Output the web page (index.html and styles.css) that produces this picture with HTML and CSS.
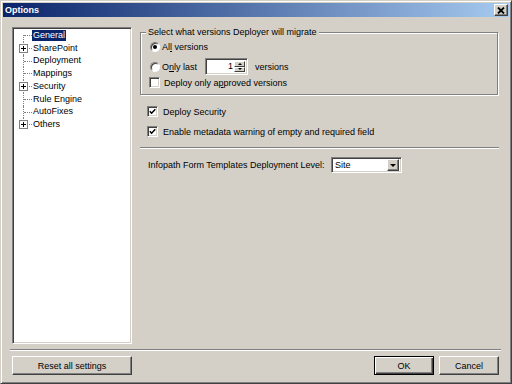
FILE: index.html
```html
<!DOCTYPE html>
<html lang="en">
  <head>
    <meta charset="UTF-8" />
    <title>Options</title>
    <link rel="stylesheet" href="styles.css">
  </head>
  <body>
    <div class="window">
      <div class="titlebar">
        <span class="title">Options</span>
        <span class="close">
          <svg width="8" height="7" viewBox="0 0 8 7"><path d="M1 0.5 L7 6.5 M7 0.5 L1 6.5" stroke="#000" stroke-width="1.8" /></svg>
        </span>
      </div>

      <div class="content">
        <div class="main">
          <div class="tree">
            <div class="node first"><span class="label sel">General</span></div>
            <div class="node"><span class="plus"></span><span class="label">SharePoint</span></div>
            <div class="node"><span class="label">Deployment</span></div>
            <div class="node"><span class="label">Mappings</span></div>
            <div class="node"><span class="plus"></span><span class="label">Security</span></div>
            <div class="node"><span class="label">Rule Engine</span></div>
            <div class="node"><span class="label">AutoFixes</span></div>
            <div class="node last"><span class="plus"></span><span class="label">Others</span></div>
          </div>

          <div class="panel">
            <fieldset class="group">
              <legend>Select what versions Deployer will migrate</legend>
              <div class="opt r1">
                <span class="radio on"></span>
                <span>Al<u>l</u> versions</span>
              </div>
              <div class="opt r2">
                <span class="radio"></span>
                <span class="only">O<u>n</u>ly last</span>
                <span class="spin">
                  <span class="spin-val">1</span>
                  <span class="spin-btns">
                    <span class="spin-btn"><span class="tri-up"></span></span>
                    <span class="spin-btn"><span class="tri-down"></span></span>
                  </span>
                </span>
                <span class="after-spin">versions</span>
              </div>
              <div class="opt r3">
                <span class="check"></span>
                <span>Deploy only a<u>p</u>proved versions</span>
              </div>
            </fieldset>

            <div class="opt out first-check">
              <span class="check"><svg width="7" height="7" viewBox="0 0 7 7"><path d="M0.8 3.2 L2.6 5.2 L6.3 1.2" fill="none" stroke="#000" stroke-width="1.5" /></svg></span>
              <span>Deploy Security</span>
            </div>
            <div class="opt out second-check">
              <span class="check"><svg width="7" height="7" viewBox="0 0 7 7"><path d="M0.8 3.2 L2.6 5.2 L6.3 1.2" fill="none" stroke="#000" stroke-width="1.5" /></svg></span>
              <span>Enable metadata warning of empty and required field</span>
            </div>

            <div class="sep panel-sep"></div>

            <div class="level-row">
              <span class="level-label">Infopath Form Templates Deployment Level:</span>
              <span class="combo">
                <span class="combo-val">Site</span>
                <span class="combo-btn"><span class="tri-dd"></span></span>
              </span>
            </div>
          </div>
        </div>

        <div class="sep bottom-sep"></div>

        <div class="footer">
          <button class="btn reset">Reset all settings</button>
          <span class="spacer"></span>
          <button class="btn default">OK</button>
          <button class="btn">Cancel</button>
        </div>
      </div>
    </div>
  </body>
</html>
```

FILE: styles.css
```css
body {
  margin: 0;
  font-family: "Liberation Sans", Arial, sans-serif;
  font-size: 9px;
  color: #000;
  background-color: #d4d0c8;
}
.window {
  width: 512px;
  height: 384px;
  box-sizing: border-box;
  background-color: #d4d0c8;
  border: 1px solid;
  border-color: #d4d0c8 #404040 #404040 #d4d0c8;
  box-shadow: inset 1px 1px #fff, inset -1px -1px #808080;
  padding: 2px;
  display: flex;
  flex-direction: column;
}
.titlebar {
  height: 14px;
  flex-shrink: 0;
  background: linear-gradient(to right, #0a246a, #a6caf0);
  display: flex;
  align-items: center;
  justify-content: space-between;
  padding: 0 1px 0 2px;
}
.title {
  color: #fff;
  font-weight: bold;
}
.close {
  width: 14px;
  height: 12px;
  box-sizing: border-box;
  background-color: #d4d0c8;
  border: 1px solid;
  border-color: #fff #404040 #404040 #fff;
  box-shadow: inset -1px -1px #808080;
  display: flex;
  align-items: center;
  justify-content: center;
}
.content {
  flex: 1;
  padding: 10px 10px 0 9px;
  display: flex;
  flex-direction: column;
}
.main {
  display: flex;
  gap: 8px;
  height: 317px;
}

/* tree */
.tree {
  width: 120px;
  flex-shrink: 0;
  box-sizing: border-box;
  background-color: #fff;
  border: 1px solid;
  border-color: #808080 #fff #fff #808080;
  box-shadow: inset 1px 1px #404040, inset -1px -1px #d4d0c8;
  padding: 1px 0 0 1px;
}
.node {
  position: relative;
  height: 12.75px;
  padding-left: 18px;
  display: flex;
  align-items: center;
}
.node::before {
  content: "";
  position: absolute;
  left: 9px;
  top: 0;
  bottom: 0;
  border-left: 1px dotted #808080;
}
.node.first::before {
  top: 6px;
}
.node.last::before {
  bottom: 6px;
}
.node::after {
  content: "";
  position: absolute;
  left: 10px;
  top: 6px;
  width: 8px;
  border-top: 1px dotted #808080;
}
.plus {
  position: absolute;
  z-index: 1;
  left: 5px;
  top: 2px;
  width: 9px;
  height: 9px;
  box-sizing: border-box;
  border: 1px solid #808080;
  background-color: #fff;
}
.plus::before {
  content: "";
  position: absolute;
  left: 1px;
  top: 3px;
  width: 5px;
  height: 1px;
  background-color: #000;
}
.plus::after {
  content: "";
  position: absolute;
  left: 3px;
  top: 1px;
  width: 1px;
  height: 5px;
  background-color: #000;
}
.label {
  line-height: 11px;
  padding: 0 1px;
}
.label.sel {
  background-color: #0a246a;
  color: #fff;
}

/* right panel */
.panel {
  flex: 1;
  display: flex;
  flex-direction: column;
}
.group {
  margin: 0 1px 0 0;
  padding: 2px 0 5px 8px;
  border: 1px solid #808080;
  box-shadow: inset 1px 1px #fff, 1px 1px #fff;
}
.group legend {
  margin-left: -3px;
  padding: 0 2px;
  line-height: 11px;
  background-color: #d4d0c8;
}
.opt {
  display: flex;
  align-items: center;
  height: 13px;
}
.r1 {
  margin-left: 1px;
  gap: 2px;
}
.r2 {
  margin-left: 1px;
  margin-top: 5px;
  height: 17px;
  gap: 2px;
}
.r3 {
  margin-top: 1px;
  gap: 4px;
}
.radio {
  width: 10px;
  height: 10px;
  box-sizing: border-box;
  border-radius: 50%;
  border: 1px solid;
  border-color: #808080 #fff #fff #808080;
  box-shadow: inset 1px 1px #404040;
  background-color: #fff;
  display: flex;
  align-items: center;
  justify-content: center;
}
.radio.on::after {
  content: "";
  width: 4px;
  height: 4px;
  border-radius: 50%;
  background-color: #000;
}
.check {
  width: 11px;
  height: 11px;
  box-sizing: border-box;
  border: 1px solid;
  border-color: #808080 #fff #fff #808080;
  box-shadow: inset 1px 1px #404040, inset -1px -1px #d4d0c8;
  background-color: #fff;
  display: flex;
  align-items: center;
  justify-content: center;
}
.only {
  width: 41px;
}
.spin {
  width: 43px;
  height: 17px;
  box-sizing: border-box;
  border: 1px solid;
  border-color: #808080 #fff #fff #808080;
  box-shadow: inset 1px 1px #404040, inset -1px -1px #d4d0c8;
  background-color: #fff;
  padding: 2px;
  display: flex;
}
.spin-val {
  flex: 1;
  text-align: right;
  padding-right: 1px;
  line-height: 11px;
}
.spin-btns {
  width: 11px;
  display: flex;
  flex-direction: column;
}
.spin-btn {
  flex: 1;
  box-sizing: border-box;
  background-color: #d4d0c8;
  border: 1px solid;
  border-color: #fff #404040 #404040 #fff;
  display: flex;
  align-items: center;
  justify-content: center;
}
.tri-up {
  border-left: 2px solid transparent;
  border-right: 2px solid transparent;
  border-bottom: 2px solid #000;
}
.tri-down {
  border-left: 2px solid transparent;
  border-right: 2px solid transparent;
  border-top: 2px solid #000;
}
.after-spin {
  margin-left: 5px;
}
.out {
  margin-left: 7px;
  gap: 5px;
}
.first-check {
  margin-top: 10px;
}
.second-check {
  margin-top: 7px;
}
.sep {
  height: 0;
  border-top: 1px solid #808080;
  border-bottom: 1px solid #fff;
}
.panel-sep {
  margin-top: 9px;
}
.level-row {
  margin-top: 8px;
  margin-left: 8px;
  display: flex;
  align-items: center;
}
.level-label {
  width: 183px;
}
.combo {
  width: 71px;
  height: 16px;
  box-sizing: border-box;
  border: 1px solid;
  border-color: #808080 #fff #fff #808080;
  box-shadow: inset 1px 1px #404040, inset -1px -1px #d4d0c8;
  background-color: #fff;
  padding: 2px;
  display: flex;
  align-items: center;
}
.combo-val {
  flex: 1;
  padding-left: 1px;
  color: #000;
}
.combo-btn {
  width: 12px;
  height: 12px;
  box-sizing: border-box;
  background-color: #d4d0c8;
  border: 1px solid;
  border-color: #fff #404040 #404040 #fff;
  box-shadow: inset -1px -1px #808080;
  display: flex;
  align-items: center;
  justify-content: center;
}
.tri-dd {
  border-left: 3px solid transparent;
  border-right: 3px solid transparent;
  border-top: 3px solid #000;
}

/* bottom */
.bottom-sep {
  margin: 5px -2px 0;
}
.footer {
  margin-top: 5px;
  display: flex;
  gap: 5px;
}
.spacer {
  flex: 1;
}
.btn {
  width: 60px;
  height: 19px;
  padding: 0;
  font: inherit;
  color: #000;
  background-color: #d4d0c8;
  border: 1px solid;
  border-color: #fff #404040 #404040 #fff;
  box-shadow: inset -1px -1px #808080;
  border-radius: 0;
}
.btn.reset {
  width: 120px;
}
.btn.default {
  border: 1px solid #000;
  box-shadow: inset 1px 1px #fff, inset -1px -1px #404040, inset -2px -2px #808080;
}
```
